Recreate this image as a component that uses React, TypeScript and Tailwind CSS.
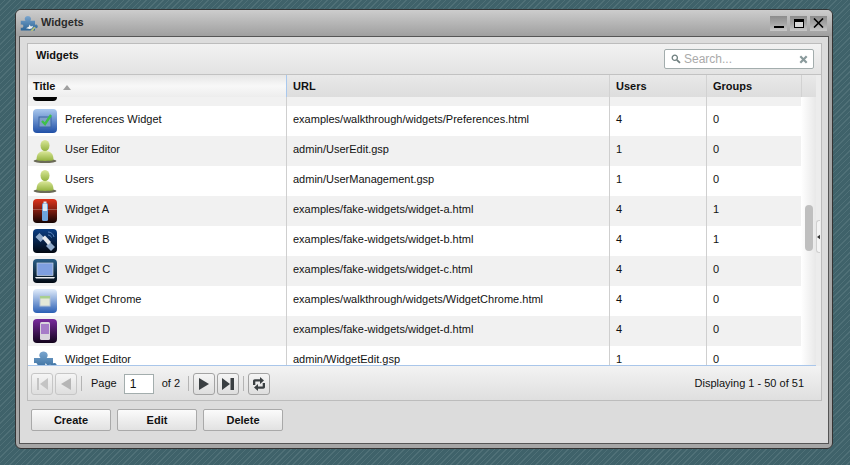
import type { ReactNode } from "react";
import clsx from "clsx";

type IconKind = "prefs" | "user" | "a" | "b" | "c" | "chrome" | "d" | "puzzle";

const rows: { icon: IconKind; title: string; url: string; users: string; groups: string }[] = [
  { icon: "prefs", title: "Preferences Widget", url: "examples/walkthrough/widgets/Preferences.html", users: "4", groups: "0" },
  { icon: "user", title: "User Editor", url: "admin/UserEdit.gsp", users: "1", groups: "0" },
  { icon: "user", title: "Users", url: "admin/UserManagement.gsp", users: "1", groups: "0" },
  { icon: "a", title: "Widget A", url: "examples/fake-widgets/widget-a.html", users: "4", groups: "1" },
  { icon: "b", title: "Widget B", url: "examples/fake-widgets/widget-b.html", users: "4", groups: "1" },
  { icon: "c", title: "Widget C", url: "examples/fake-widgets/widget-c.html", users: "4", groups: "0" },
  { icon: "chrome", title: "Widget Chrome", url: "examples/walkthrough/widgets/WidgetChrome.html", users: "4", groups: "0" },
  { icon: "d", title: "Widget D", url: "examples/fake-widgets/widget-d.html", users: "4", groups: "0" },
  { icon: "puzzle", title: "Widget Editor", url: "admin/WidgetEdit.gsp", users: "1", groups: "0" },
];

function Puzzle({ id, size = 24 }: { id: string; size?: number }) {
  return (
    <svg width={size} height={size} viewBox="0 0 24 24">
      <defs>
        <linearGradient id={id} x1="0" y1="0" x2="0" y2="1">
          <stop offset="0" stopColor="#7ba6cf" />
          <stop offset="1" stopColor="#2d6496" />
        </linearGradient>
      </defs>
      <path
        d="M1 9h6.500C6.500 8 6 6.800 6.500 5.300 7 3.500 8.700 2.500 10.500 2.500s3.500 1 4 2.800c.4 1.500 0 2.700-.8 3.700H20v5.500c1-.6 2-.6 2.800 0 1 .8 1.200 2.200.7 3.300-.6 1.200-2.200 1.700-3.500.9V22H1v-4c1 .5 2.300.4 3-.5.8-1 .6-2.500-.4-3.200-.8-.6-1.800-.5-2.600-.1z"
        fill={`url(#${id})`}
      />
      <path d="M8 19l4-2.500.5-2.500 2 2.500 3-1-1.500 3.500-3 1z" fill="#eef0f0" />
      <path d="M14 22l5-5 2 1-4.500 5z" fill="#b9c27a" />
    </svg>
  );
}

function Glossy({ id, top, bottom, children }: { id: string; top: string; bottom: string; children?: ReactNode }) {
  return (
    <svg width="24" height="24" viewBox="0 0 24 24">
      <defs>
        <linearGradient id={id} x1="0" y1="0" x2="0" y2="1">
          <stop offset="0" stopColor={top} />
          <stop offset="1" stopColor={bottom} />
        </linearGradient>
      </defs>
      <rect width="24" height="24" rx="4" fill={`url(#${id})`} />
      {children}
    </svg>
  );
}

function WidgetIcon({ kind }: { kind: IconKind }) {
  if (kind === "puzzle") return <Puzzle id="pz-row" />;
  if (kind === "user") {
    return (
      <svg width="24" height="24" viewBox="0 0 24 24">
        <defs>
          <linearGradient id="usr" x1="0" y1="0" x2="0" y2="1">
            <stop offset="0" stopColor="#dbe89a" />
            <stop offset="1" stopColor="#93b23f" />
          </linearGradient>
        </defs>
        <ellipse cx="12" cy="22" rx="11.500" ry="2" fill="#6b6b58" />
        <path d="M3.500 21c0-6 2.500-9 8.500-9s8.500 3 8.500 9c-3 1.200-14 1.200-17 0z" fill="url(#usr)" />
        <ellipse cx="12" cy="6.500" rx="4.500" ry="5.500" fill="url(#usr)" />
      </svg>
    );
  }
  if (kind === "prefs") {
    return (
      <Glossy id="prf" top="#a9c8ee" bottom="#1f4fa6">
        <rect x="6" y="8" width="12" height="10" fill="#7f9fc9" stroke="#3d66a5" />
        <path d="M9 12l3 3 6-9" fill="none" stroke="#3fc04a" strokeWidth="2.400" />
      </Glossy>
    );
  }
  if (kind === "a") {
    return (
      <Glossy id="wa" top="#e0331c" bottom="#120302">
        <rect x="9" y="4" width="6" height="18" rx="1.500" fill="#6da3de" />
        <rect x="10.500" y="2.500" width="3" height="2" fill="#dfe8f0" />
        <rect x="10" y="5" width="4" height="7" fill="#dbe8f4" />
        <rect x="0" y="10" width="24" height="1" fill="#ffffff" opacity=".25" />
      </Glossy>
    );
  }
  if (kind === "b") {
    return (
      <Glossy id="wb" top="#0b3f85" bottom="#01060f">
        <path d="M2.500 8l4-4 5 5-4 4z" fill="#8faacb" />
        <path d="M13 17l4-4 5 5-4 4z" fill="#8faacb" />
        <path d="M9 9l3-2.500 6 6.500-3 3z" fill="#e8ebee" />
        <path d="M15 3c3 0 5.500 2 6 5M15 6c1.500 0 3 1 3.500 2.500" fill="none" stroke="#5d86bd" />
      </Glossy>
    );
  }
  if (kind === "c") {
    return (
      <Glossy id="wc" top="#2a5f88" bottom="#020a14">
        <rect x="4" y="4" width="16" height="12.500" fill="#7e9fe0" stroke="#c9d4e0" strokeWidth=".7" />
        <path d="M2 18h20l-1 1.500H3z" fill="#eef0f3" />
      </Glossy>
    );
  }
  if (kind === "chrome") {
    return (
      <Glossy id="wch" top="#e2edfb" bottom="#2a5fb5">
        <rect x="7" y="7" width="10" height="10" fill="#e4e8d8" stroke="#b6c4d6" />
        <rect x="7" y="7" width="10" height="2.500" fill="#a9cf8f" />
      </Glossy>
    );
  }
  return (
    <Glossy id="wd" top="#7a2a9e" bottom="#12031c">
      <rect x="7" y="3" width="10" height="18" rx="1.500" fill="#d9d4dd" />
      <rect x="8" y="5" width="8" height="10" fill="#a67bc8" />
    </Glossy>
  );
}

function WindowButton({ children }: { children: ReactNode }) {
  return (
    <div className="flex h-[15px] w-[17px] items-center justify-center bg-gradient-to-b from-[#8c8c8c] via-[#a5a5a5] to-[#c8c8c8]">
      {children}
    </div>
  );
}

function PageButton({ disabled, children }: { disabled?: boolean; children: ReactNode }) {
  return (
    <div
      className={clsx(
        "flex h-[22px] w-[22px] items-center justify-center rounded-[3px] border bg-gradient-to-b from-[#f5f5f5] to-[#dedede]",
        disabled ? "border-[#c6c6c6]" : "border-[#a3a3a3]",
      )}
    >
      {children}
    </div>
  );
}

function Sep({ className }: { className?: string }) {
  return <div className={clsx("h-[15px] w-px bg-[#b4b4b4]", className)} />;
}

function ActionButton({ label }: { label: string }) {
  return (
    <button
      type="button"
      className="h-[22px] w-[80px] rounded-[2px] border border-[#a9a9a9] bg-gradient-to-b from-[#fbfbfb] via-[#eeeeee] to-[#e2e2e2] text-[11px] font-bold text-[#111]"
    >
      {label}
    </button>
  );
}

export default function App() {
  return (
    <div className="h-[465px] w-[850px] overflow-hidden bg-[#3f626a] bg-[repeating-linear-gradient(135deg,#3f626a_0,#3f626a_3px,#4f7077_3px,#4f7077_4px)] pl-[15px] pt-[9px] font-['Liberation_Sans',Arial,sans-serif] text-[11px] text-[#111]">
      <div className="flex h-[440px] w-[818px] flex-col rounded-[6px] border border-[#333] bg-[#a6a6a6] px-[3px] pb-[4px]">
        {/* title bar */}
        <div className="-mx-[3px] flex h-[26px] items-center rounded-t-[5px] bg-gradient-to-b from-[#cdcdcd] to-[#9f9f9f] pl-[4px] pr-[5px]">
          <Puzzle id="pz-title" size={18} />
          <span className="mb-[1px] ml-[3px] flex-1 text-[11px] font-bold text-[#2b2b2b]">Widgets</span>
          <div className="flex gap-[3px]">
            <WindowButton>
              <div className="mt-[8px] h-[2px] w-[10px] bg-black" />
            </WindowButton>
            <WindowButton>
              <div className="h-[9px] w-[10px] border border-t-[3px] border-black bg-[#d8d8d8]" />
            </WindowButton>
            <WindowButton>
              <svg width="11" height="10" viewBox="0 0 11 10">
                <path d="M1 0.500l9 9M10 0.500l-9 9" stroke="#000" strokeWidth="1.600" />
              </svg>
            </WindowButton>
          </div>
        </div>

        {/* body */}
        <div className="flex flex-1 flex-col border border-[#555] bg-[#dcdcdc] pl-[7px] pr-[6px] pt-[6px]">
          <div className="flex h-[358px] flex-col border border-[#bcbcbc]">
            <div className="flex h-[31px] shrink-0 items-start justify-between border-b border-[#c2c2c2] bg-gradient-to-b from-[#f2f2f2] to-[#e3e3e3] pl-[8px] pr-[7px]">
              <span className="mt-[5px] font-bold leading-[13px] text-[#111]">Widgets</span>
              <div className="mt-[5px] flex h-[20px] w-[150px] items-center rounded-[2px] border border-[#a3adad] bg-white pl-[6px] pr-[5px]">
                <svg width="10" height="10" viewBox="0 0 10 10">
                  <circle cx="3.800" cy="3.800" r="2.600" fill="none" stroke="#6f7f7f" strokeWidth="1.300" />
                  <path d="M5.800 5.800l3.200 3" stroke="#6f7f7f" strokeWidth="1.800" />
                </svg>
                <span className="ml-[3px] flex-1 text-[12px] text-[#aaa]">Search...</span>
                <svg width="9" height="9" viewBox="0 0 9 9">
                  <path d="M1.300 1.300l6.400 6.400M7.700 1.300l-6.400 6.400" stroke="#8a9a9c" strokeWidth="2.200" />
                </svg>
              </div>
            </div>

            <div className="flex min-h-0 flex-1 bg-[#ececec]">
              <div className="flex w-[788px] flex-col border-b border-[#a9c6ea]">
                {/* column header */}
                <div className="flex h-[22px] shrink-0 font-bold text-[#111]">
                  <div className="flex w-[259px] items-center border-r border-[#a8c8ee] bg-gradient-to-b from-[#e6e6e6] via-[#f8f8f8] to-[#ededed] pl-[5px]">
                    Title
                    <svg className="ml-[8px] mt-[2px]" width="8" height="5" viewBox="0 0 8 5">
                      <path d="M4 0l4 5H0z" fill="#a0a0a0" />
                    </svg>
                  </div>
                  <div className="flex flex-1 bg-gradient-to-b from-[#e9e9e9] to-[#dddddd]">
                    <div className="flex w-[323px] items-center border-r border-[#d2d2d2] pl-[6px]">URL</div>
                    <div className="flex w-[97px] items-center border-r border-[#d2d2d2] pl-[6px]">Users</div>
                    <div className="flex w-[94px] items-center pl-[6px]">Groups</div>
                    <div className="flex-1 border-l border-[#d2d2d2]" />
                  </div>
                </div>

                <div className="flex min-h-0 flex-1">
                  <div className="w-[773px] overflow-hidden bg-white">
                    {/* partly scrolled row */}
                    <div className="flex h-[9px] bg-[#f1f1f1]">
                      <div className="w-[259px] border-r border-[#cfcfcf] pl-[5px]">
                        <div className="h-[4px] w-[24px] rounded-b-[4px] bg-black" />
                      </div>
                      <div className="w-[323px] border-r border-[#cfcfcf]" />
                      <div className="w-[97px] border-r border-[#cfcfcf]" />
                    </div>
                    {rows.map((row, i) => (
                      <div key={row.title} className={clsx("flex h-[30px] shrink-0", i % 2 === 0 ? "bg-white" : "bg-[#f1f1f1]")}>
                        <div className="flex w-[259px] items-center border-r border-[#cfcfcf] pl-[5px]">
                          <WidgetIcon kind={row.icon} />
                          <span className="mb-[4px] ml-[8px]">{row.title}</span>
                        </div>
                        <div className="flex w-[323px] items-center border-r border-[#cfcfcf] pb-[4px] pl-[6px]">{row.url}</div>
                        <div className="flex w-[97px] items-center border-r border-[#cfcfcf] pb-[4px] pl-[6px]">{row.users}</div>
                        <div className="flex flex-1 items-center pb-[4px] pl-[6px]">{row.groups}</div>
                      </div>
                    ))}
                  </div>
                  {/* scrollbar */}
                  <div className="w-[15px] bg-gradient-to-r from-[#ffffff] to-[#e8e8e8] pl-[4px] pt-[108px]">
                    <div className="h-[46px] w-[8px] rounded-[4px] bg-[#bfbfbf]" />
                  </div>
                </div>
              </div>

              {/* collapse handle */}
              <div className="flex-1 pt-[145px]">
                <div className="flex h-[33px] w-[4px] items-center rounded-l-[3px] border border-r-0 border-[#d0d0d0] bg-[#f4f4f4]">
                  <svg width="4" height="6" viewBox="0 0 4 6">
                    <path d="M0 3l4-3v6z" fill="#333" />
                  </svg>
                </div>
              </div>
            </div>

            {/* paging toolbar */}
            <div className="flex h-[34px] shrink-0 items-center bg-gradient-to-b from-[#f3f3f3] to-[#dfdfdf] pl-[3px] pr-[17px] pt-[1px]">
              <PageButton disabled>
                <svg width="16" height="16" viewBox="0 0 16 16">
                  <path d="M3 2h2v12H3zM14 2v12L6 8z" fill="#c4c4c4" />
                </svg>
              </PageButton>
              <div className="ml-[2px]">
                <PageButton disabled>
                  <svg width="12" height="14" viewBox="0 0 12 14">
                    <path d="M11 1v12L1 7z" fill="#b5b5b5" />
                  </svg>
                </PageButton>
              </div>
              <Sep className="ml-[4px]" />
              <span className="ml-[9px]">Page</span>
              <div className="ml-[7px] flex h-[20px] w-[30px] items-center border border-[#a3adad] bg-white pl-[5px] text-[12px]">1</div>
              <span className="ml-[8px]">of 2</span>
              <Sep className="ml-[8px]" />
              <div className="ml-[4px]">
                <PageButton>
                  <svg width="12" height="14" viewBox="0 0 12 14">
                    <path d="M1 1v12l10-6z" fill="#3a3f42" />
                  </svg>
                </PageButton>
              </div>
              <div className="ml-[2px]">
                <PageButton>
                  <svg width="16" height="14" viewBox="0 0 16 14">
                    <path d="M2 1v12l8-6zM10.500 1h3.500v12h-3.500z" fill="#3a3f42" />
                  </svg>
                </PageButton>
              </div>
              <Sep className="ml-[4px]" />
              <div className="ml-[4px]">
                <PageButton>
                  <svg width="16" height="16" viewBox="0 0 16 16">
                    <path d="M2 9V5c0-1 .8-1.700 1.700-1.700H9V1l4 3.500L9 8V5.500H4.300V9z" fill="#3a3f42" />
                    <path d="M14 7v4c0 1-.8 1.700-1.700 1.700H7V15l-4-3.500L7 8v2.500h4.700V7z" fill="#3a3f42" />
                  </svg>
                </PageButton>
              </div>
              <span className="ml-auto">Displaying 1 - 50 of 51</span>
            </div>
          </div>

          <div className="mt-[8px] flex gap-[6px] pl-[4px]">
            <ActionButton label="Create" />
            <ActionButton label="Edit" />
            <ActionButton label="Delete" />
          </div>
        </div>
      </div>
    </div>
  );
}
